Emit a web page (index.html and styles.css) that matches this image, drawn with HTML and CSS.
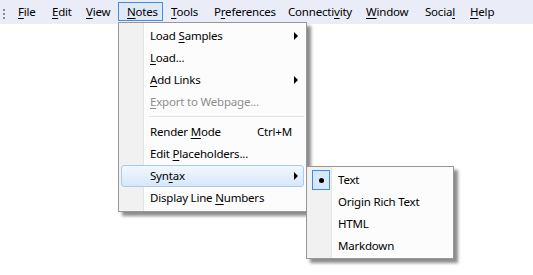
FILE: index.html
```html
<!DOCTYPE html>
<html lang="en">
<head>
  <meta charset="UTF-8">
  <title>Notes menu</title>
  <link rel="stylesheet" href="styles.css">
</head>
<body>
  <div class="menubar">
    <span class="grip"></span>
    <span class="top-item w-file"><u>F</u>ile</span>
    <span class="top-item w-edit"><u>E</u>dit</span>
    <span class="top-item w-view"><u>V</u>iew</span>
    <span class="top-item w-notes open"><u>N</u>otes</span>
    <span class="top-item w-tools"><u>T</u>ools</span>
    <span class="top-item w-prefs">P<u>r</u>eferences</span>
    <span class="top-item w-conn">Connecti<u>v</u>ity</span>
    <span class="top-item w-window"><u>W</u>indow</span>
    <span class="top-item w-social">Socia<u>l</u></span>
    <span class="top-item w-help"><u>H</u>elp</span>
  </div>

  <!-- Notes dropdown -->
  <div class="menu notes-menu">
    <div class="item sub">Load <u>S</u>amples</div>
    <div class="item"><u>L</u>oad...</div>
    <div class="item sub"><u>A</u>dd Links</div>
    <div class="item disabled"><u>E</u>xport to Webpage...</div>
    <div class="sep"></div>
    <div class="item">Render <u>M</u>ode <span class="key">Ctrl+M</span></div>
    <div class="item">Edit <u>P</u>laceholders...</div>
    <div class="item sub hot">Syn<u>t</u>ax</div>
    <div class="item">Display Line <u>N</u>umbers</div>
  </div>

  <!-- Syntax submenu -->
  <div class="menu syntax-menu">
    <div class="item checked"><span class="check"><span class="dot"></span></span>Text</div>
    <div class="item">Origin Rich Text</div>
    <div class="item">HTML</div>
    <div class="item">Markdown</div>
  </div>
</body>
</html>
```

FILE: styles.css
```css
body {
  margin: 0;
  background: #fff;
  font-family: "Noto Sans", "Open Sans", sans-serif;
  font-size: 11.5px;
  letter-spacing: -0.2px;
  color: #000;
  width: 533px;
  height: 275px;
  overflow: hidden;
  position: relative;
}
u {
  text-decoration-thickness: 1px;
  text-underline-offset: 2px;
}

/* menu bar */
.menubar {
  height: 24px;
  background: #eaecf8;
  display: flex;
  align-items: flex-start;
  padding: 2px 0 0 3px;
  box-sizing: border-box;
}
.grip {
  width: 2px;
  height: 10px;
  margin: 7px 4px 0 0;
  background: repeating-linear-gradient(to bottom, #8a8a9a 0 2px, transparent 2px 4px);
}
.top-item {
  height: 19px;
  line-height: 17px;
  padding-left: 8px;
  box-sizing: border-box;
  border: 1px solid transparent;
  white-space: nowrap;
}
.top-item.open {
  background: #dfe9f8;
  border-color: #3f8fde;
}
.w-file { width: 34px; }
.w-edit { width: 34px; }
.w-view { width: 41px; }
.w-notes { width: 45px; margin-right: -1px; }
.w-tools { width: 43px; }
.w-prefs { width: 74px; }
.w-conn { width: 78px; }
.w-window { width: 59px; }
.w-social { width: 45px; }
.w-help { width: 40px; }

/* popup menus */
.menu {
  position: absolute;
  box-sizing: border-box;
  border: 1px solid #979797;
  padding: 2px;
  background:
    linear-gradient(to right, #f1f1f1 0 24px, #e2e3e3 24px 25px, #fff 25px 26px, #fcfcfc 26px);
  box-shadow: 4px 4px 3px rgba(0, 0, 0, 0.45);
}
.notes-menu {
  left: 118px;
  top: 22px;
  width: 189px;
  height: 190px;
}
.syntax-menu {
  left: 306px;
  top: 166px;
  width: 148px;
  height: 93px;
  padding: 2px 2px 1px;
}
.item {
  position: relative;
  height: 22px;
  line-height: 20px;
  padding-left: 28px;
  box-sizing: border-box;
  border: 1px solid transparent;
  border-radius: 3px;
  white-space: nowrap;
}
.item.disabled {
  color: #8d8d8d;
}
.item.sub::after {
  content: "";
  position: absolute;
  right: 5px;
  top: 6px;
  border-left: 4px solid #000;
  border-top: 4px solid transparent;
  border-bottom: 4px solid transparent;
}
.item.hot {
  background: linear-gradient(to bottom, #f2f7fd, #d7e7f9);
  border-color: #a9cbee;
}
.key {
  position: absolute;
  left: 135px;
}
.sep {
  height: 8px;
  margin-left: 28px;
  background: linear-gradient(to bottom, transparent 3px, #e0e0e0 3px 4px, #fff 4px 5px, transparent 5px);
}

/* radio check in submenu */
.check {
  position: absolute;
  left: 2px;
  top: 0;
  width: 18px;
  height: 20px;
  box-sizing: border-box;
  border: 1px solid #3c8fe0;
  background: #d6e8f9;
  display: flex;
  align-items: center;
  justify-content: center;
}
.dot {
  width: 5px;
  height: 5px;
  border-radius: 50%;
  background: #000;
}
```
